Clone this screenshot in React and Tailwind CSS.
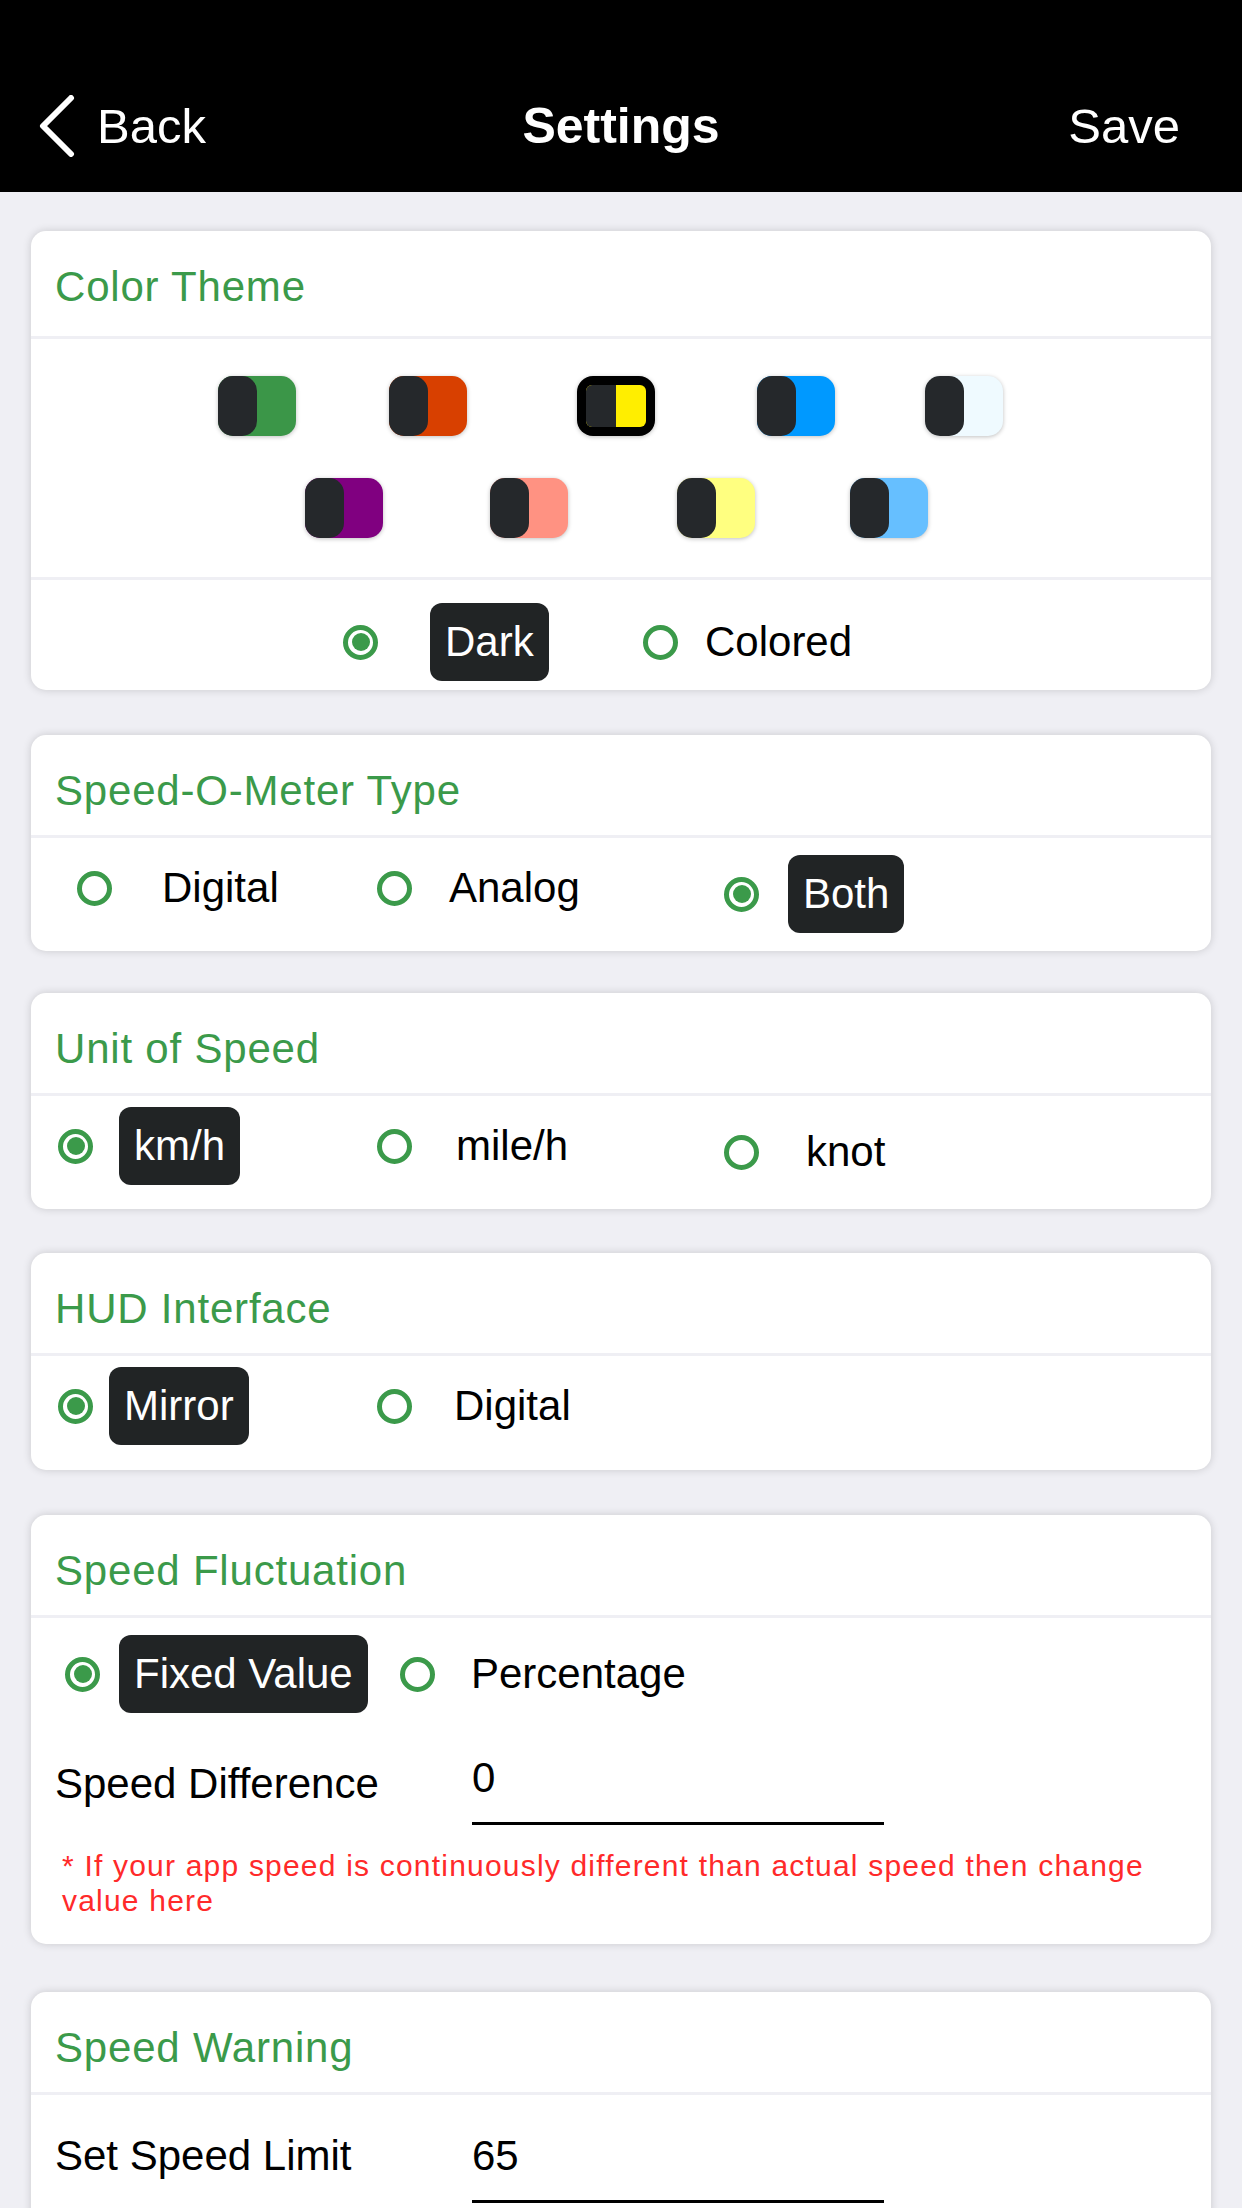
const GREEN = 'text-[#3B9A4A]'

function Radio({ on }) {
  return (
    <div className="w-[35px] h-[35px] shrink-0 rounded-full border-[5px] border-[#3B9A4A] flex items-center justify-center">
      {on && <div className="w-[18px] h-[18px] rounded-full bg-[#3B9A4A]" />}
    </div>
  )
}

function Option({ on, label, gap, className = '' }) {
  return (
    <div className={`flex items-center shrink-0 ${className}`}>
      <Radio on={on} />
      <span
        className={`${gap} h-[78px] px-[15px] flex items-center rounded-[12px] text-[42px] leading-none whitespace-nowrap ${
          on ? 'bg-[#212425] text-white' : 'text-black'
        }`}
      >
        {label}
      </span>
    </div>
  )
}

function Card({ title, className = '', headerPb = 'pb-[23px]', children }) {
  return (
    <div className={`mx-[31px] bg-white rounded-[15px] shadow-[0_0_8px_rgba(0,0,0,0.16)] overflow-hidden ${className}`}>
      <div className={`pl-[24px] pt-[35px] ${headerPb} text-[42px] leading-none tracking-[0.8px] ${GREEN}`}>{title}</div>
      <div className="h-[3px] bg-[#EFEFF4]" />
      {children}
    </div>
  )
}

function Swatch({ color, selected, className }) {
  if (selected) {
    return (
      <div className={`w-[78px] h-[60px] shrink-0 rounded-[16px] bg-black p-[9px] shadow-[0_1px_4px_rgba(0,0,0,0.25)] ${className}`}>
        <div className={`flex h-full rounded-[6px] overflow-hidden ${color}`}>
          <div className="w-1/2 h-full bg-[#25282B]" />
        </div>
      </div>
    )
  }
  return (
    <div className={`w-[78px] h-[60px] shrink-0 rounded-[15px] shadow-[0_1px_4px_rgba(0,0,0,0.25)] ${color} ${className}`}>
      <div className="w-[39px] h-full rounded-[15px] bg-[#25282B]" />
    </div>
  )
}

const rowOne = [
  { color: 'bg-[#3B9648]', className: 'ml-[187px]' },
  { color: 'bg-[#D84000]', className: 'ml-[93px]' },
  { color: 'bg-[#FFEE00]', className: 'ml-[110px]', selected: true },
  { color: 'bg-[#0099FF]', className: 'ml-[102px]' },
  { color: 'bg-[#EFFAFF]', className: 'ml-[90px]' },
]

const rowTwo = [
  { color: 'bg-[#800080]', className: 'ml-[274px]' },
  { color: 'bg-[#FF9282]', className: 'ml-[107px]' },
  { color: 'bg-[#FFFF80]', className: 'ml-[109px]' },
  { color: 'bg-[#66BFFF]', className: 'ml-[95px]' },
]

function InputRow({ label, value, labelMt = '' }) {
  return (
    <div className="flex items-start pl-[24px]">
      <div className={`w-[417px] text-[42px] leading-[50px] text-black ${labelMt}`}>{label}</div>
      <div className="w-[412px] border-b-[3px] border-black pb-[19px] text-[42px] leading-[50px] text-black">{value}</div>
    </div>
  )
}

export default function App() {
  return (
    <div className="h-[2208px] overflow-hidden bg-[#EFEFF4] font-['Liberation_Sans',Arial,sans-serif]">
      <div className="h-[192px] bg-black flex flex-col justify-end">
        <div className="h-[132px] grid grid-cols-[1fr_auto_1fr] items-center text-white">
          <div className="flex items-center pl-[39px]">
            <svg width="36" height="62" viewBox="0 0 36 62" fill="none">
              <polyline points="32,3 4,31 32,59" stroke="white" strokeWidth="6" strokeLinecap="round" strokeLinejoin="round" />
            </svg>
            <span className="ml-[22px] text-[49px] leading-none">Back</span>
          </div>
          <div className="text-[50px] leading-none font-bold">Settings</div>
          <div className="flex justify-end pr-[62px]">
            <span className="text-[49px] leading-none">Save</span>
          </div>
        </div>
      </div>

      <Card title="Color Theme" className="mt-[39px]" headerPb="pb-[28px]">
        <div className="pt-[37px] pb-[39px] flex flex-col gap-[42px]">
          <div className="flex">
            {rowOne.map((s, i) => (
              <Swatch key={i} {...s} />
            ))}
          </div>
          <div className="flex">
            {rowTwo.map((s, i) => (
              <Swatch key={i} {...s} />
            ))}
          </div>
        </div>
        <div className="h-[3px] bg-[#EFEFF4]" />
        <div className="flex items-center pl-[312px] pt-[23px] pb-[9px]">
          <Option on label="Dark" gap="ml-[52px]" className="w-[300px]" />
          <Option label="Colored" gap="ml-[12px]" />
        </div>
      </Card>

      <Card title="Speed-O-Meter Type" className="mt-[45px]">
        <div className="flex items-start pl-[46px] pt-[11px] pb-[18px]">
          <Option label="Digital" gap="ml-[35px]" className="w-[300px]" />
          <Option label="Analog" gap="ml-[22px]" className="w-[347px]" />
          <Option on label="Both" gap="ml-[29px]" className="mt-[6px]" />
        </div>
      </Card>

      <Card title="Unit of Speed" className="mt-[42px]">
        <div className="flex items-start pl-[27px] pt-[11px] pb-[18px]">
          <Option on label="km/h" gap="ml-[26px]" className="w-[319px]" />
          <Option label="mile/h" gap="ml-[29px]" className="w-[347px]" />
          <Option label="knot" gap="ml-[32px]" className="mt-[6px]" />
        </div>
      </Card>

      <Card title="HUD Interface" className="mt-[44px]">
        <div className="flex items-start pl-[27px] pt-[11px] pb-[25px]">
          <Option on label="Mirror" gap="ml-[16px]" className="w-[319px]" />
          <Option label="Digital" gap="ml-[27px]" />
        </div>
      </Card>

      <Card title="Speed Fluctuation" className="mt-[45px]">
        <div className="flex items-center pl-[34px] pt-[17px]">
          <Option on label="Fixed Value" gap="ml-[19px]" className="w-[335px]" />
          <Option label="Percentage" gap="ml-[21px]" />
        </div>
        <div className="mt-[40px]">
          <InputRow label="Speed Difference" value="0" labelMt="mt-[6px]" />
        </div>
        <p className="mt-[23px] px-[31px] pb-[26px] text-[30px] leading-[35px] tracking-[1.2px] text-[#FF2A2A]">
          * If your app speed is continuously different than actual speed then change
          <br />
          value here
        </p>
      </Card>

      <Card title="Speed Warning" className="mt-[48px]">
        <div className="pt-[36px] pb-[40px]">
          <InputRow label="Set Speed Limit" value="65" />
        </div>
      </Card>
    </div>
  )
}
